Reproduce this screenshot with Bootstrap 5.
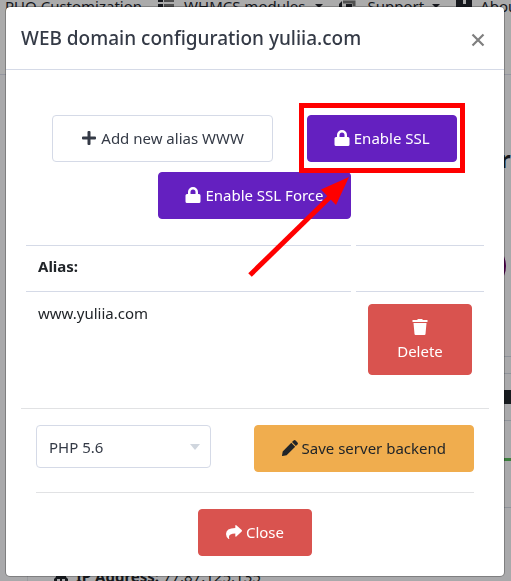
<!DOCTYPE html>
<html lang="en">
<head>
<meta charset="utf-8">
<meta name="viewport" content="width=device-width, initial-scale=1">
<title>WEB domain configuration</title>
<link href="https://cdn.jsdelivr.net/npm/bootstrap@5.3.0/dist/css/bootstrap.min.css" rel="stylesheet">
<style>
  body { font-family: "Noto Sans", "Open Sans", sans-serif; font-size: 15px; line-height: 24px; color: #212529; background: #fff; }
  .page-bg { height: 100vh; }
  .page-nav { height: 75px; padding-left: 5px; border-bottom: 1px solid #dde0ee; white-space: nowrap; color: #23262e; line-height: 12px; }
  .page-nav svg { flex: none; }
  .nav-gap { margin-left: 10px; }
  .page-caret { border: 4px solid transparent; border-top-color: #23262e; border-bottom: 0; }
  .page-main { background: #fdfdff; }
  .page-card { margin-left: 27px; border-left: 1px solid #e8e8ee; padding-left: 26px; margin-bottom: -7px; }
  .page-side { width: 11px; }
  .side-line { height: 1px; background: #d5dbe6; }
  .side-title { font-size: 24px; line-height: 24px; }
  .side-dot { width: 50px; height: 50px; margin: 70px 0 65px -44px; background: #6f0070; }
  .side-bar { height: 14px; background: #23292f; }
  .side-green { height: 3px; margin: 37px 0 46px; background: #59bd5c; }
  .page-shade { --bs-backdrop-opacity: .33; }

  .domain-dialog { max-width: 500px; margin: 6px 6px 6px 5px; }
  .domain-dialog .modal-content { border-radius: 5px; border-color: rgba(0,0,0,.25); }
  .domain-dialog .modal-header { padding: 15px; height: 63px; border-bottom: 1px solid #d5dae7; }
  .domain-dialog .modal-title { font-size: 19px; line-height: 32px; color: #343a46; font-weight: 500; }
  .close-x { color: #7f7f7f; line-height: 0; padding: 4px; margin-top: 3px; }
  .domain-dialog .modal-body { padding: 45px 15px 20px; }

  .btn-tall { --bs-btn-padding-x: 27px; --bs-btn-padding-y: 10px; --bs-btn-font-size: 15px; --bs-btn-line-height: 25px; --bs-btn-border-radius: 4px; white-space: nowrap; }
  .btn-tall svg { width: 16px; height: 16px; margin-top: -3px; }
  .btn-plain { --bs-btn-color: #343a46; --bs-btn-bg: #fff; --bs-btn-border-color: #d5dae7; }
  .btn-violet { --bs-btn-color: #fff; --bs-btn-bg: #6420c0; --bs-btn-border-color: #6420c0; --bs-btn-padding-x: 26px; }
  .btn-red { --bs-btn-color: #fff; --bs-btn-bg: #d9534f; --bs-btn-border-color: #d9534f; }
  .btn-amber { --bs-btn-color: #212529; --bs-btn-bg: #f0ad4e; --bs-btn-border-color: #f0ad4e; }

  .action-row { column-gap: 34px; row-gap: 10px; padding-right: 1px; }
  .btn-plain { --bs-btn-padding-x: 28px; }
  .callout-frame { position: absolute; inset: -12px -8px -11px; border: 5px solid #f00; pointer-events: none; }
  .callout-arrow { position: absolute; right: 104px; top: 58px; pointer-events: none; }

  .alias-table { border-collapse: separate; border-spacing: 5px 0; margin-top: 26px; }
  .alias-table th { border-top: 1px solid #d5dae7; border-bottom: 1px solid #d5dae7; padding: 8px 12px 12px; line-height: 25px; }
  .alias-table td { padding: 12px 12px 0; vertical-align: top; line-height: 18px; }
  .alias-table .alias-act { width: 128px; }
  .thin-rule { margin: 0; opacity: 1; border-top: 1px solid #e1e2e4; }
  .table-rule { margin-top: 33px; }

  .dialog-foot { padding: 0 15px; }
  .backend-row { padding: 16px 0 20px; }
  .php-pick { width: 175px; }
  .php-pick select { width: 100%; height: 43px; padding: 0 12px; border: 1px solid #d5dae7; border-radius: 4px; background: #fff; color: #343a46; appearance: none; font-size: 15px; }
  .php-pick::after { content: ""; position: absolute; right: 11px; top: 19px; border: 5px solid transparent; border-top: 6px solid #d0d6de; border-bottom: 0; pointer-events: none; }
</style>
</head>
<body>
<svg class="d-none">
  <symbol id="lock" viewBox="0 0 16 16"><path fill="currentColor" d="M3 7V5a5 5 0 0 1 10 0v2h1a1.500 1.500 0 0 1 1.500 1.500v6A1.500 1.500 0 0 1 14 16H2a1.500 1.500 0 0 1-1.500-1.500v-6A1.500 1.500 0 0 1 2 7zM5.500 7h5V5a2.500 2.500 0 0 0-5 0z"/></symbol>
</svg>

<div class="page-bg d-flex flex-column overflow-hidden" aria-hidden="true">
  <div class="page-nav d-flex align-items-start flex-shrink-0">
    <span>PUQ Customization</span>
    <svg class="ms-3" width="16" height="12" viewBox="0 0 16 12"><path fill="#23262e" d="M0 0h5v2H0zM0 4h5v4H0z"/><path fill="#777" d="M6 0h10v2H6zM6 4h10v4H6z"/></svg>
    <span class="nav-gap">WHMCS modules</span>
    <span class="page-caret nav-gap mt-1"></span>
    <svg class="ms-3" width="18" height="12" viewBox="0 0 18 12"><path fill="none" stroke="#777" stroke-width="3" d="M4 2h11v4"/><path fill="#23262e" d="M3 1v8H0V4zM7 4h6v5H7z"/></svg>
    <span class="nav-gap">Support</span>
    <span class="page-caret ms-2 mt-1"></span>
    <svg class="ms-3" width="16" height="12" viewBox="0 0 16 12"><path fill="#23262e" d="M0 0h16v12H0z"/><path fill="#fff" d="M7 0h3v4H7z"/></svg>
    <span class="ms-2">About</span>
  </div>
  <div class="page-main d-flex flex-grow-1">
    <div class="page-card d-flex align-items-end flex-grow-1">
      <svg class="me-2 mb-1" width="14" height="16" viewBox="0 0 14 16"><path fill="#23262e" d="M2 0h10v9l2 2v5H0v-5l2-2zM4 3v2h6V3zM3 11v2h3v-2zm5 0v2h3v-2z"/></svg>
      <span><b>IP Address:</b> 77.87.125.135</span>
    </div>
    <div class="page-side pt-5">
      <div class="side-title mt-4 fw-bold">r</div>
      <div class="side-dot rounded-circle"></div>
      <div class="side-line mb-3"></div>
      <div class="side-line mb-3"></div>
      <div class="side-bar mb-3"></div>
      <div class="side-line"></div>
      <div class="side-green"></div>
      <div class="side-line"></div>
    </div>
  </div>
</div>
<div class="modal-backdrop show page-shade"></div>

<div class="modal d-block" role="dialog" aria-modal="true" aria-labelledby="dlgTitle">
  <div class="modal-dialog domain-dialog">
    <div class="modal-content">
      <div class="modal-header">
        <h5 class="modal-title" id="dlgTitle">WEB domain configuration yuliia.com</h5>
        <button type="button" class="btn border-0 close-x" aria-label="Close">
          <svg width="14" height="14" viewBox="0 0 14 14"><path stroke="currentColor" stroke-width="2.200" d="M1.500 1.500l11 11M12.500 1.500l-11 11"/></svg>
        </button>
      </div>
      <div class="modal-body">
        <div class="action-row d-flex flex-wrap justify-content-center">
          <button type="button" class="btn btn-tall btn-plain"><svg viewBox="0 0 16 16"><path fill="currentColor" d="M6.500 2q0-1 1-1h1q1 0 1 1v4.500H14q1 0 1 1v1q0 1-1 1H9.500V14q0 1-1 1h-1q-1 0-1-1V9.500H2q-1 0-1-1v-1q0-1 1-1h4.500z"/></svg> Add new alias WWW</button>
          <div class="position-relative">
            <button type="button" class="btn btn-tall btn-violet"><svg><use href="#lock"/></svg> Enable SSL</button>
            <span class="callout-frame"></span>
            <svg class="callout-arrow z-1" width="106" height="106" viewBox="0 0 106 106"><path stroke="#f00" stroke-width="5" d="M3 102L84 23"/><path fill="#f00" d="M102 4L74 16.500 89 32z"/></svg>
          </div>
          <button type="button" class="btn btn-tall btn-violet"><svg><use href="#lock"/></svg> Enable SSL Force</button>
        </div>

        <table class="alias-table w-100">
          <thead><tr><th scope="col">Alias:</th><th scope="col" class="alias-act" aria-label="Action"></th></tr></thead>
          <tbody><tr>
            <td>www.yuliia.com</td>
            <td><button type="button" class="btn btn-tall btn-red w-100"><svg class="d-block mx-auto mt-1 mb-1" viewBox="0 0 16 16"><path fill="currentColor" d="M.500 1H5l1-1h4l1 1h4.500v2H.500zM1.500 4h13l-1 11q-.1 1-1 1h-9q-.9 0-1-1z"/></svg>Delete</button></td>
          </tr></tbody>
        </table>
        <hr class="thin-rule table-rule">
        <div class="dialog-foot">
          <div class="backend-row d-flex justify-content-between align-items-start">
            <div class="php-pick position-relative">
              <select aria-label="PHP version"><option>PHP 5.6</option></select>
            </div>
            <button type="button" class="btn btn-tall btn-amber"><svg viewBox="0 0 16 16"><path fill="currentColor" d="M9.300 2.800l3.900 3.900-8.600 8.600L.600 16q-.6 0-.6-.6l.700-4zM10 2.100L11.600.500q1-.9 2 0l1.900 1.900q.9 1 0 2L13.900 6z"/></svg> Save server backend</button>
          </div>
          <hr class="thin-rule">
          <div class="text-center pt-3">
            <button type="button" class="btn btn-tall btn-red"><svg viewBox="0 0 16 16"><path fill="currentColor" d="M15.700 6L10.300 1.200Q9.500.7 9.300 1.500V4Q0 4.200 0 10q0 3 2.600 4.900.9.4.6-.6Q1.700 9.600 9.300 9.500v2.800q.2.8 1 .3L15.700 7.500q.6-.7 0-1.500z"/></svg> Close</button>
          </div>
        </div>
      </div>
    </div>
  </div>
</div>
<script src="https://cdn.jsdelivr.net/npm/bootstrap@5.3.0/dist/js/bootstrap.bundle.min.js"></script>
</body>
</html>
